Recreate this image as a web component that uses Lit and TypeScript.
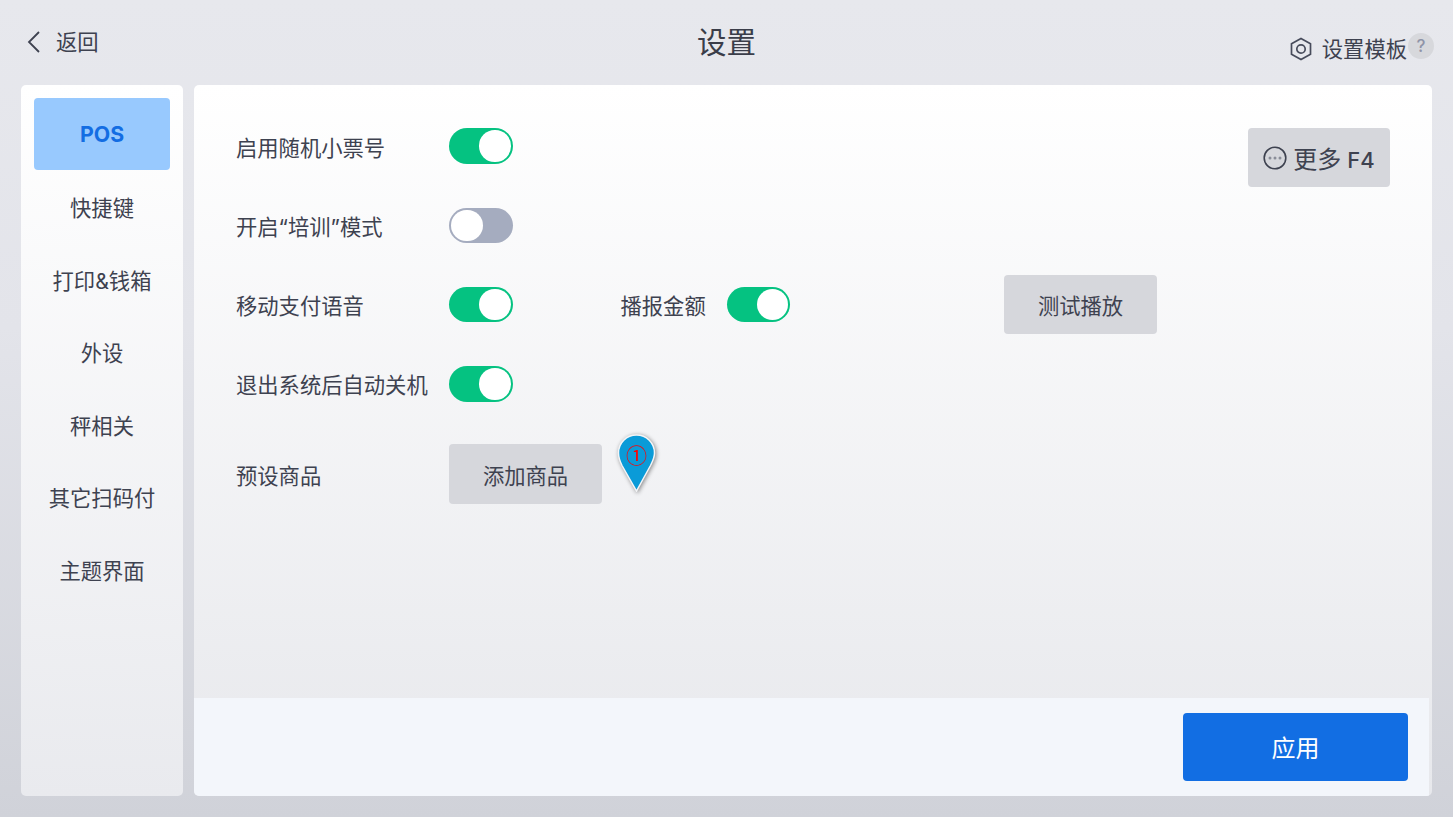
import { LitElement, html, css } from "lit";
import { customElement } from "lit/decorators.js";

const NAV = ["POS", "快捷键", "打印&钱箱", "外设", "秤相关", "其它扫码付", "主题界面"];

@customElement("app-root")
export class AppRoot extends LitElement {
  static styles = css`
    :host {
      display: block;
      width: 1453px;
      height: 817px;
      overflow: hidden;
      font-family: "Inter", "Noto Sans CJK SC", sans-serif;
      color: #3e4250;
      background: linear-gradient(180deg, #e7e8ed 0%, #e3e4ea 40%, #d0d2d9 100%);
    }
    .page { display: flex; flex-direction: column; height: 817px; padding: 0 21px 21px; box-sizing: border-box; }
    .top { height: 85px; flex: none; display: grid; grid-template-columns: 1fr auto 1fr; align-items: start; }
    .back { display: flex; align-items: center; gap: 15px; font-size: 21.3px; height: 85px; line-height: 1; padding-left: 6px; }
    .back svg { margin-top: -1px; }
    .title { font-size: 29.5px; line-height: 85px; color: #3a3d49; }
    .tpl { justify-self: end; display: flex; align-items: center; height: 30px; margin-top: 34px; margin-right: -2px; font-size: 21.3px; line-height: 30px; }
    .tpl svg { margin-right: 10px; }
    .help { width: 26px; height: 26px; border-radius: 50%; background: #d7d8dc; color: #8f94a8; font: 500 17px/26px "Inter", sans-serif; text-align: center; margin: -6px 0 0 1px; }
    .body { flex: 1; display: flex; gap: 11px; min-height: 0; }
    .side { width: 162px; flex: none; border-radius: 5px; padding: 13px; box-sizing: border-box; background: linear-gradient(180deg, #fff 0%, #e9eaee 100%); }
    .nav { height: 72.5px; display: flex; align-items: center; justify-content: center; font-size: 21.3px; color: #3e4250; border-radius: 4px; }
    .nav.on { background: #98c9fe; color: #136de3; font: 700 21.3px "Inter", sans-serif; height: 72px; margin-bottom: .5px; }
    .main { width: 1238px; flex: none; border-radius: 5px; display: flex; flex-direction: column; background: linear-gradient(180deg, #fff 0%, #e7e8ec 100%); overflow: hidden; position: relative; }
    .content { flex: 1; padding: 43px 42px 0; position: relative; }
    .row { display: flex; align-items: center; height: 36px; margin-bottom: 43.3px; font-size: 21.3px; }
    .label { width: 213px; flex: none; white-space: nowrap; }
    .row.last { height: 60px; margin-top: -1px; }
    .sw { width: 63.5px; height: 35.5px; border-radius: 18px; background: #05c281; position: relative; flex: none; }
    .sw::after { content: ""; position: absolute; top: 2px; right: 2px; width: 31.5px; height: 31.5px; border-radius: 50%; background: #fff; }
    .sw.off { background: #a5acbf; }
    .sw.off::after { right: auto; left: 2px; }
    .sub { margin-left: 108px; width: 106px; flex: none; }
    .btn { background: #d6d7dc; border-radius: 4px; display: flex; align-items: center; justify-content: center; font-size: 21.3px; color: #3e4250; box-sizing: border-box; flex: none; }
    .test { width: 153px; height: 59px; margin-left: 214px; }
    .add { width: 153px; height: 60px; }
    .more { position: absolute; top: 43px; left: 1054px; width: 142px; height: 59px; gap: 6px; font-size: 24px; }
    .more b { font: 500 22px "Inter", sans-serif; margin-left: 6px; }
    .pin { position: absolute; left: 423px; top: 349px; width: 39px; filter: drop-shadow(1px 1px 2px rgba(0,0,0,.45)); }
    .pin-num { position: absolute; left: 0; top: 7px; width: 39px; text-align: center; color: #f00; font: 21px/26px "Noto Sans CJK SC", sans-serif; }
    .foot { height: 98px; flex: none; width: 1235px; background: #f3f6fb; display: flex; align-items: center; justify-content: flex-end; padding-right: 21px; box-sizing: border-box; }
    .apply { width: 225px; height: 68px; background: #126ee3; border-radius: 4px; color: #fff; font-size: 24px; display: flex; align-items: center; justify-content: center; margin-top: -1px; }
  `;

  render() {
    return html`<div class="page">
      <div class="top">
        <div class="back">
          <svg width="14" height="22" viewBox="0 0 14 22"><path d="M12 1 2 11l10 10" fill="none" stroke="#3e4250" stroke-width="1.800"/></svg>
          <span>返回</span>
        </div>
        <div class="title">设置</div>
        <div class="tpl">
          <svg width="22" height="24" viewBox="0 0 22 24" fill="none" stroke="#474b5b" stroke-width="1.7"><path d="M11 1.5 20.5 6.8v10.4L11 22.5 1.5 17.2V6.8z"/><circle cx="11" cy="12" r="4.2"/></svg>
          <span>设置模板</span><div class="help">?</div>
        </div>
      </div>
      <div class="body">
        <div class="side">
          ${NAV.map((n, i) => html`<div class="nav ${i === 0 ? "on" : ""}">${n}</div>`)}
        </div>
        <div class="main">
          <div class="content">
            <div class="row"><div class="label">启用随机小票号</div><div class="sw"></div></div>
            <div class="row"><div class="label">开启“培训”模式</div><div class="sw off"></div></div>
            <div class="row"><div class="label">移动支付语音</div><div class="sw"></div>
              <div class="sub">播报金额</div><div class="sw"></div>
              <div class="btn test">测试播放</div></div>
            <div class="row"><div class="label">退出系统后自动关机</div><div class="sw"></div></div>
            <div class="row last"><div class="label">预设商品</div><div class="btn add">添加商品</div></div>
            <div class="btn more">
              <svg width="24" height="24" viewBox="0 0 24 24"><circle cx="12" cy="12" r="10.8" fill="none" stroke="#3e4250" stroke-width="1.6"/><circle cx="7" cy="12" r="1.5" fill="#8a8d98"/><circle cx="12" cy="12" r="1.5" fill="#8a8d98"/><circle cx="17" cy="12" r="1.5" fill="#8a8d98"/></svg>
              <span>更多<b>F4</b></span>
            </div>
            <div class="pin">
              <svg width="39" height="58" viewBox="0 0 39 58"><path d="M19.500 1C9.500 1 1.500 9 1.500 19c0 5 1.500 8.500 3.500 12.500L19.500 57l14-25.500c2-4 4-7.500 4-12.500C37.500 9 29.500 1 19.500 1z" fill="#0a9bd8" stroke="#f4f5f7" stroke-width="1.500"/></svg>
              <div class="pin-num">①</div>
            </div>
          </div>
          <div class="foot"><div class="apply">应用</div></div>
        </div>
      </div>
    </div>`;
  }
}
